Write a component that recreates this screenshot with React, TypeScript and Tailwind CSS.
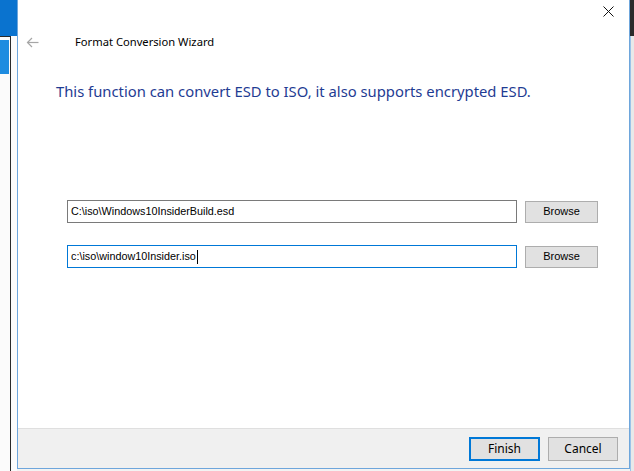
import React from 'react';

function BackArrow() {
  return (
    <svg width="13" height="11" viewBox="0 0 13 11" fill="none" stroke="#a6a6a6" strokeWidth="1.2">
      <path d="M12.5 5.5H1.5" />
      <path d="M6 1L1.5 5.5L6 10" />
    </svg>
  );
}

function CloseX() {
  return (
    <svg width="11" height="11" viewBox="0 0 11 11" fill="none" stroke="#111" strokeWidth="1">
      <path d="M0.5 0.5L10.5 10.5" />
      <path d="M10.5 0.5L0.5 10.5" />
    </svg>
  );
}

function PathRow({value, focused, caret}: {value: string; focused?: boolean; caret?: boolean}) {
  return (
    <div className="flex items-center gap-[8px]">
      <div
        className={
          focused
            ? 'flex h-[23px] w-[450px] items-center border border-[#0078d7] bg-white pl-[3px]'
            : 'flex h-[23px] w-[450px] items-center border border-[#7a7a7a] bg-white pl-[3px]'
        }>
        <span className="font-['Liberation_Sans',sans-serif] text-[10.8px] leading-none text-black">{value}</span>
        {caret && <span className="ml-[1px] h-[14px] w-[1px] bg-black" />}
      </div>
      <button className="h-[22px] w-[73px] border border-[#adadad] bg-[#e1e1e1] font-['Liberation_Sans',sans-serif] text-[11px] text-black">
        Browse
      </button>
    </div>
  );
}

export default function App() {
  return (
    <div className="flex h-[471px] w-[634px] overflow-hidden bg-[#f3f3f3] font-['Noto_Sans',sans-serif]">
      {/* window behind, left edge */}
      <div className="flex w-[17px] flex-col">
        <div className="h-[36px] bg-[#0a73cf]" />
        <div className="flex flex-1 bg-[#fbfbfb]">
          <div className="w-[11px] border-r border-t border-[#2a2a2a]">
            <div className="mt-[3px] h-[34px] w-[9px] bg-[#1e8ce0]" />
          </div>
        </div>
      </div>

      {/* wizard dialog */}
      <div className="flex h-[469px] w-[613px] flex-col border-b border-l border-r border-[#6ea6dc] bg-white">
        <div className="flex flex-1 flex-col">
          <div className="flex h-[27px] justify-end pr-[15px] pt-[6px]">
            <CloseX />
          </div>
          <div className="flex h-[30px] items-center">
            <div className="ml-[8px] w-[49px]">
              <BackArrow />
            </div>
            <span className="text-[11.2px] text-black">Format Conversion Wizard</span>
          </div>
          <div className="ml-[38px] mt-[23px] text-[14.8px] leading-[22px] text-[#1f3c93]">
            This function can convert ESD to ISO, it also supports encrypted ESD.
          </div>
          <div className="ml-[49px] mt-[98px] flex flex-col gap-[22px]">
            <PathRow value="C:\iso\Windows10InsiderBuild.esd" />
            <PathRow value="c:\iso\window10Insider.iso" focused caret />
          </div>
        </div>
        <div className="flex h-[40px] items-start justify-end gap-[8px] border-t border-[#dfdfdf] bg-[#f0f0f0] pr-[11px] pt-[8px]">
          <button className="h-[24px] w-[71px] border-2 border-[#0078d7] bg-[#e1e1e1] text-[12px] text-black">
            Finish
          </button>
          <button className="h-[24px] w-[70px] border border-[#adadad] bg-[#e1e1e1] text-[12px] text-black">
            Cancel
          </button>
        </div>
      </div>

      {/* window behind, right edge */}
      <div className="flex w-[4px] flex-col">
        <div className="h-[36px] bg-[#2b2b2b]" />
        <div className="flex-1 border-l border-[#9cc3e8] bg-[#e9e9e9]" />
      </div>
    </div>
  );
}
